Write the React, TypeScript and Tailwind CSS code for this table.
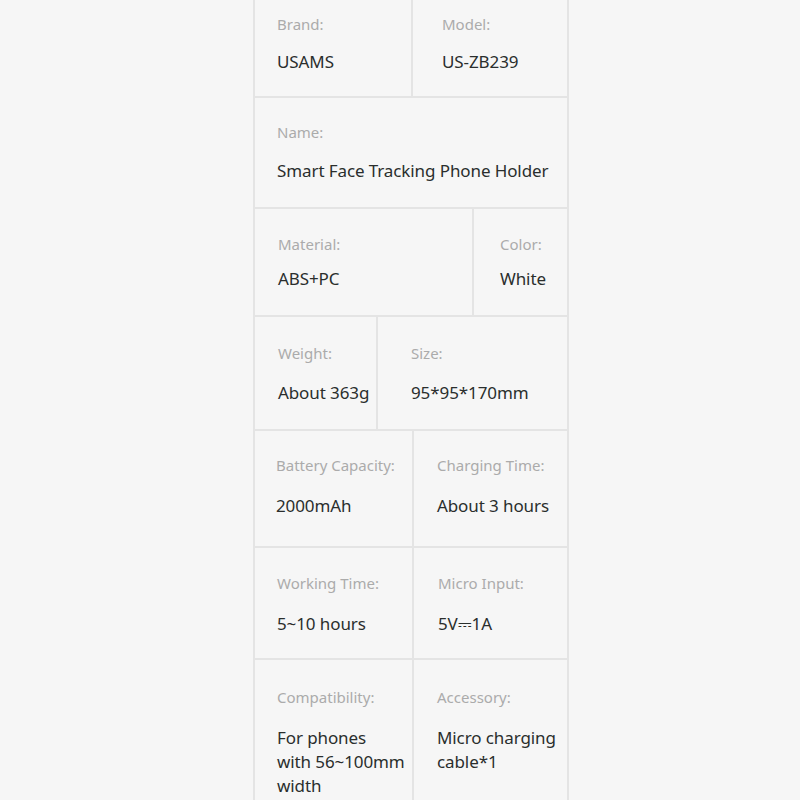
import React from "react";

type Cell = { label: string; value: React.ReactNode; w?: string; pl: string };
type Row = { h: string; pt: string; gap: string; cells: Cell[] };

const rows: Row[] = [
  {
    h: "h-[98px]",
    pt: "pt-[14px]",
    gap: "gap-[16px]",
    cells: [
      { label: "Brand:", value: "USAMS", w: "w-[158px]", pl: "pl-[22px]" },
      { label: "Model:", value: "US-ZB239", pl: "pl-[29px]" },
    ],
  },
  {
    h: "h-[111px]",
    pt: "pt-[24px]",
    gap: "gap-[17px]",
    cells: [{ label: "Name:", value: "Smart Face Tracking Phone Holder", pl: "pl-[22px]" }],
  },
  {
    h: "h-[108px]",
    pt: "pt-[25px]",
    gap: "gap-[13px]",
    cells: [
      { label: "Material:", value: "ABS+PC", w: "w-[219px]", pl: "pl-[23px]" },
      { label: "Color:", value: "White", pl: "pl-[26px]" },
    ],
  },
  {
    h: "h-[114px]",
    pt: "pt-[26px]",
    gap: "gap-[18px]",
    cells: [
      { label: "Weight:", value: "About 363g", w: "w-[123px]", pl: "pl-[23px]" },
      { label: "Size:", value: "95*95*170mm", pl: "pl-[33px]" },
    ],
  },
  {
    h: "h-[117px]",
    pt: "pt-[24px]",
    gap: "gap-[19px]",
    cells: [
      { label: "Battery Capacity:", value: "2000mAh", w: "w-[159px]", pl: "pl-[21px]" },
      { label: "Charging Time:", value: "About 3 hours", pl: "pl-[23px]" },
    ],
  },
  {
    h: "h-[112px]",
    pt: "pt-[25px]",
    gap: "gap-[19px]",
    cells: [
      { label: "Working Time:", value: "5~10 hours", w: "w-[159px]", pl: "pl-[22px]" },
      { label: "Micro Input:", value: "5V⎓1A", pl: "pl-[24px]" },
    ],
  },
  {
    h: "h-[160px]",
    pt: "pt-[27px]",
    gap: "gap-[19px]",
    cells: [
      {
        label: "Compatibility:",
        value: (
          <>
            For phones
            <br />
            with 56~100mm
            <br />
            width
          </>
        ),
        w: "w-[159px]",
        pl: "pl-[22px]",
      },
      {
        label: "Accessory:",
        value: (
          <>
            Micro charging
            <br />
            cable*1
          </>
        ),
        pl: "pl-[23px]",
      },
    ],
  },
];

export default function App() {
  return (
    <div
      className="w-[800px] h-[800px] overflow-hidden bg-[#f6f6f6]"
      style={{ fontFamily: '"Noto Sans", "Open Sans", sans-serif' }}
    >
      <div className="ml-[253px] w-[316px] border-x-2 border-[#e4e4e4]">
        {rows.map((row, i) => (
          <div key={i} className={`flex ${row.h} border-b-2 border-[#e4e4e4] box-border`}>
            {row.cells.map((c, j) => (
              <div
                key={j}
                className={`${c.w ? c.w + " border-r-2 border-[#e4e4e4]" : "flex-1"} ${c.pl} ${row.pt} ${row.gap} flex flex-col box-border`}
              >
                <div className="text-[15px] leading-[20px] text-[#ababab] whitespace-nowrap">{c.label}</div>
                <div className="text-[17px] leading-[24px] text-[#2a2e2d] whitespace-nowrap tracking-[-0.1px]">{c.value}</div>
              </div>
            ))}
          </div>
        ))}
      </div>
    </div>
  );
}
